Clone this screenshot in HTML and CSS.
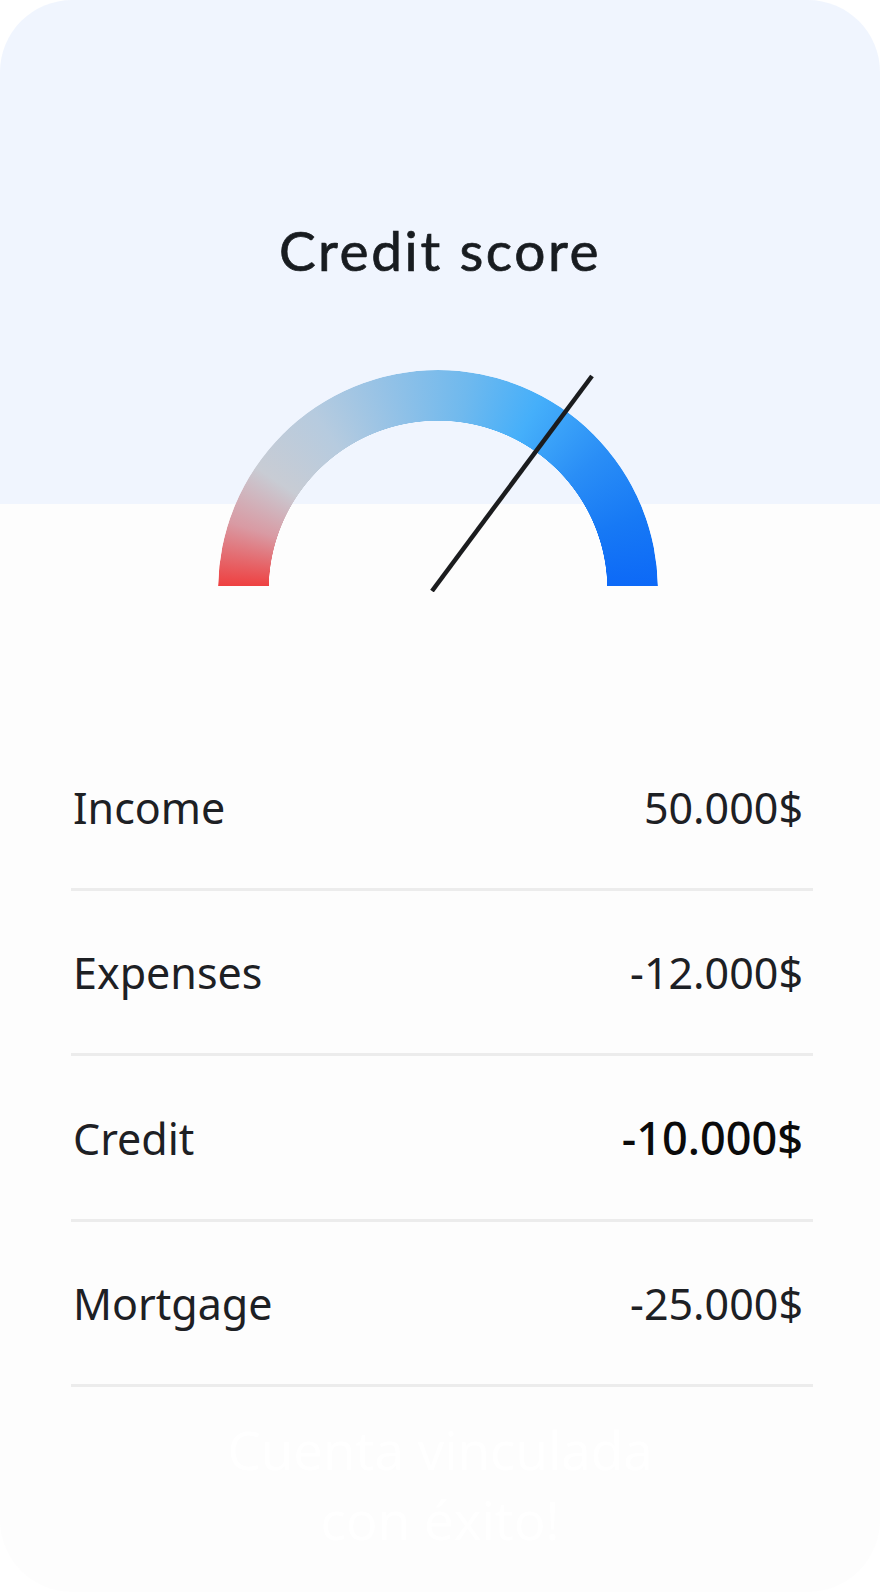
FILE: index.html
```html
<!DOCTYPE html>
<html lang="en">
<head>
  <meta charset="UTF-8">
  <meta name="viewport" content="width=device-width, initial-scale=1.0">
  <title>Credit score</title>
  <link rel="stylesheet" href="styles.css">
</head>
<body>

  <div class="card">
    <h1 class="title">Credit score</h1>

    <div class="gauge">
      <div class="gauge-clip">
        <div class="gauge-arc"></div>
      </div>
      <svg class="needle" width="440" height="222" viewBox="0 0 440 222">
        <line x1="374" y1="6" x2="214" y2="221" stroke="#1b1c1e" stroke-width="4.5"/>
      </svg>
    </div>

    <div class="rows">
      <div class="row">
        <span class="label">Income</span>
        <span class="value">50.000$</span>
      </div>
      <div class="row">
        <span class="label">Expenses</span>
        <span class="value">-12.000$</span>
      </div>
      <div class="row">
        <span class="label">Credit</span>
        <span class="value strong">-10.000$</span>
      </div>
      <div class="row">
        <span class="label">Mortgage</span>
        <span class="value">-25.000$</span>
      </div>
    </div>

    <p class="toast">Cuenta vinculada<br>con éxito!</p>
  </div>

</body>
</html>
```

FILE: styles.css
```css
body { margin: 0; background: #fff; }

.card {
  width: 880px;
  height: 1592px;
  border-radius: 72px;
  overflow: hidden;
  background: linear-gradient(#f0f5fe 504px, #fdfdfd 504px);
}

.title {
  margin: 0;
  padding-top: 217px;
  text-align: center;
  font-family: Lato, "Liberation Sans", sans-serif;
  font-weight: 400;
  font-size: 55px;
  line-height: 66px;
  letter-spacing: 2.6px;
  -webkit-text-stroke: 0.7px #181c20;
  color: #181c20;
}

.gauge { position: relative; width: 440px; height: 221px; margin: 87px 0 0 218px; }
.gauge-clip { width: 440px; height: 216px; overflow: hidden; }
.gauge-arc {
  width: 440px;
  height: 440px;
  border-radius: 50%;
  background: conic-gradient(from 270deg,
    #f03a3a 0deg, #d99aa3 18deg, #c8ccd4 34deg, #b6cbdf 55deg,
    #95c2e6 75deg, #6fb9ee 98deg, #45affa 118deg, #2a8ef6 140deg,
    #1779f5 160deg, #0c68f7 180deg, #0c68f7 360deg);
  -webkit-mask: radial-gradient(circle, transparent 169px, #000 169.5px);
  mask: radial-gradient(circle, transparent 169px, #000 169.5px);
}
.needle { position: absolute; top: 0; left: 0; }

.rows { margin-top: 135px; padding: 0 67px 0 71px; }
.row {
  display: flex;
  justify-content: space-between;
  align-items: baseline;
  padding: 51px 10px 50px 2px;
  border-bottom: 3px solid #ececec;
  font-family: "Noto Sans", "Open Sans", sans-serif;
  font-size: 43px;
  line-height: 61px;
  color: #1d2024;
}
.value.strong { font-size: 45px; font-weight: 500; color: #0b0b0b; }

.toast {
  margin: 28px 0 0;
  text-align: center;
  font-family: "Open Sans", sans-serif;
  font-weight: 500;
  font-size: 53px;
  line-height: 70px;
  color: #fff;
}
```
